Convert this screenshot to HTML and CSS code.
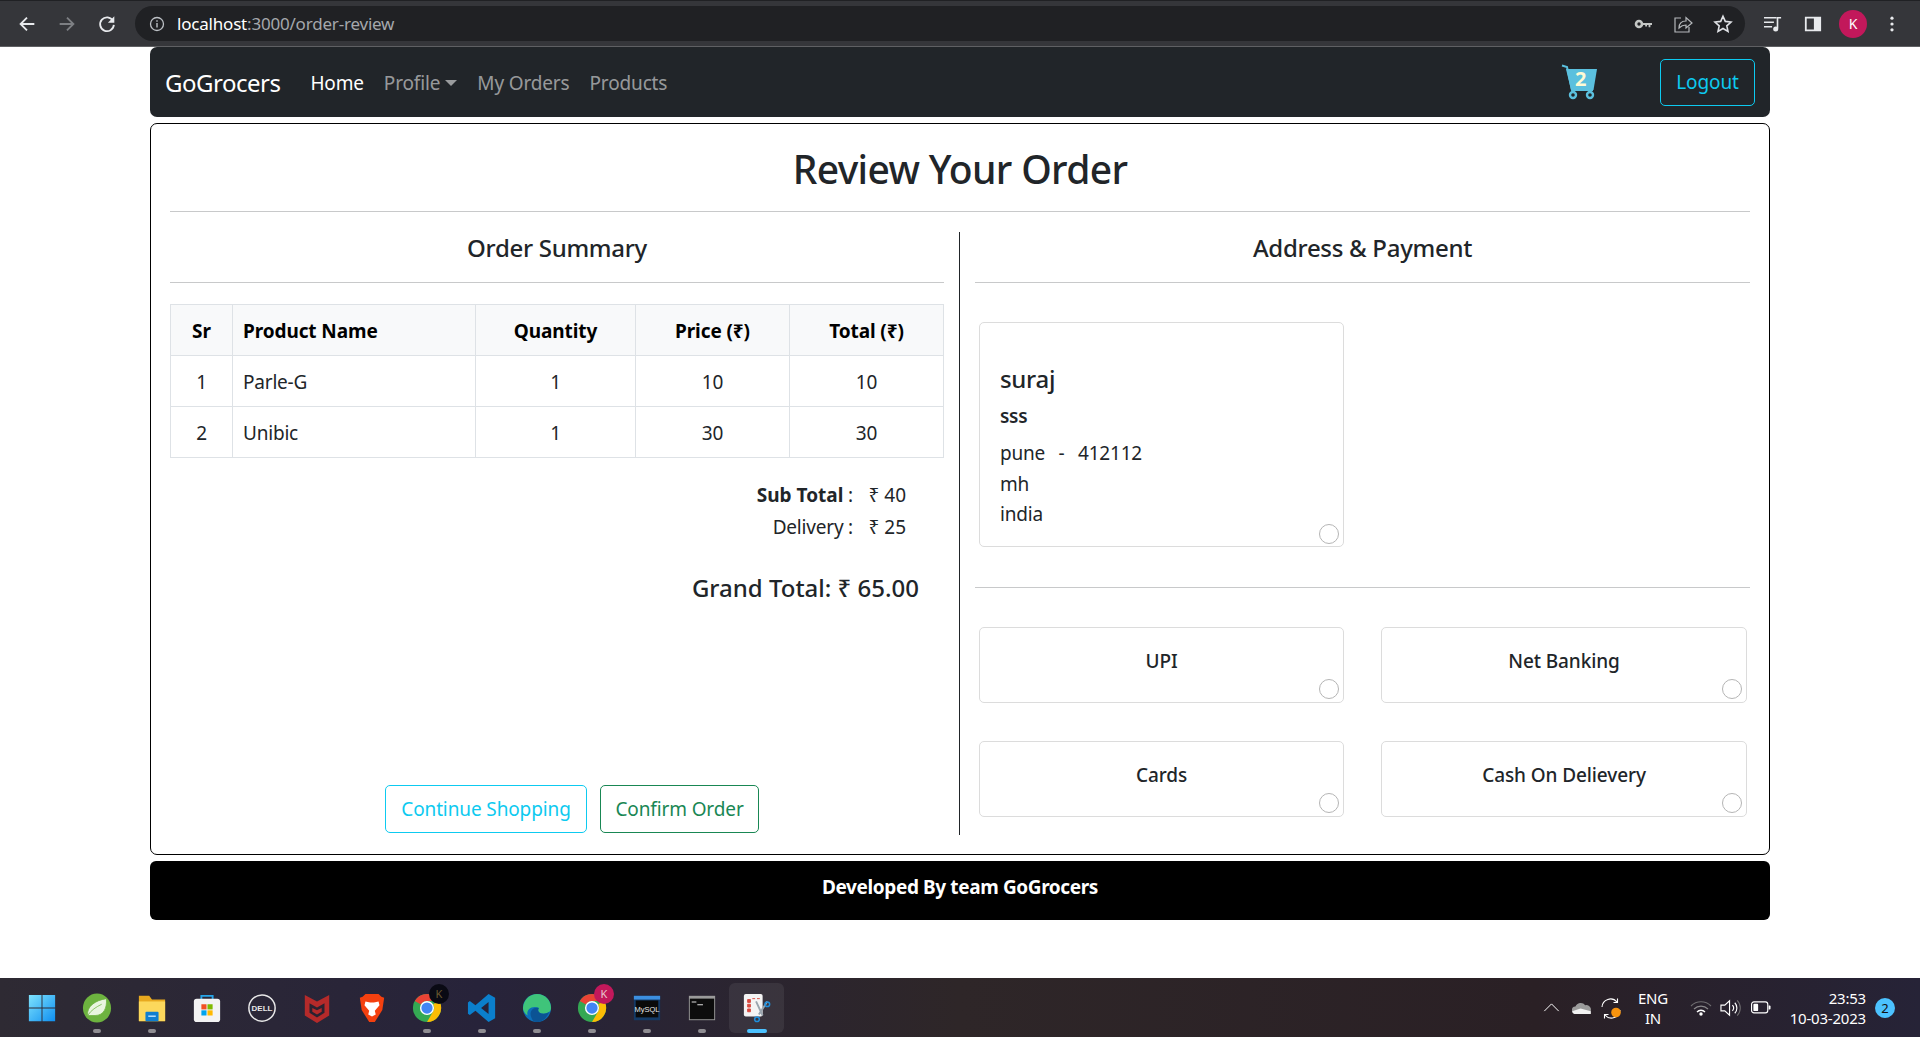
FILE: index.html
```html
<!DOCTYPE html>
<html lang="en">
<head>
<meta charset="utf-8">
<title>GoGrocers</title>
<link rel="stylesheet" href="styles.css">
</head>
<body>
<header class="chrome">
  <div class="chrome-nav">
    <svg class="ci" viewBox="0 0 24 24"><path d="M20 12H5M12 5l-7 7 7 7" fill="none" stroke="#e8eaed" stroke-width="2"/></svg>
    <svg class="ci" viewBox="0 0 24 24"><path d="M4 12h15M12 5l7 7-7 7" fill="none" stroke="#7d7f83" stroke-width="2"/></svg>
    <svg class="ci" viewBox="0 0 24 24"><path d="M18.5 8.5A7.5 7.5 0 1 0 19.5 13" fill="none" stroke="#e8eaed" stroke-width="2"/><path d="M20 3.5v7h-7z" fill="#e8eaed"/></svg>
  </div>
  <div class="omnibox">
    <svg class="info" viewBox="0 0 16 16"><circle cx="8" cy="8" r="6.5" fill="none" stroke="#bdc1c6" stroke-width="1.3"/><path d="M8 7v4.5M8 4.3v1.5" stroke="#bdc1c6" stroke-width="1.4"/></svg>
    <span class="url"><span class="host">localhost</span>:3000/order-review</span>
    <span class="spacer"></span>
    <svg class="oi" viewBox="0 0 20 20"><circle cx="6" cy="10" r="3" fill="none" stroke="#c4c7c5" stroke-width="2.6"/><path d="M9 9h10v2h-1.6v2.2h-1.8V11H14v1.6h-1.8V11H9z" fill="#c4c7c5"/></svg>
    <svg class="oi" viewBox="0 0 20 20"><path d="M8 4H2v14h14v-5M6 14c0-5 3-7 7-7V3.5l6 5.500-6 5v-3c-3 0-5 1-7 3z" fill="none" stroke="#b5b8bb" stroke-width="1.2"/></svg>
    <svg class="oi" viewBox="0 0 20 20"><path d="M10 2.2l2.3 5.2 5.7.6-4.2 3.8 1.2 5.6-5-2.9-5 2.9 1.2-5.6L2 8l5.7-.6z" fill="none" stroke="#dfe1e5" stroke-width="1.6"/></svg>
  </div>
  <div class="chrome-tools">
    <svg class="ti" viewBox="0 0 22 20"><path d="M1 3h14M1 8h11M1 13h9" stroke="#e8eaed" stroke-width="1.8"/><circle cx="14" cy="15.5" r="2.8" fill="#e8eaed"/><path d="M16 15V3h4" fill="none" stroke="#e8eaed" stroke-width="1.8"/></svg>
    <svg class="ti" viewBox="0 0 20 20"><path d="M1 2h18v16H1zM3 4v12h8V4z" fill="#e8eaed" fill-rule="evenodd"/></svg>
    <span class="avatar">K</span>
    <svg class="dots" viewBox="0 0 6 20"><circle cx="3" cy="3.5" r="1.8" fill="#e8eaed"/><circle cx="3" cy="10" r="1.8" fill="#e8eaed"/><circle cx="3" cy="16.5" r="1.8" fill="#e8eaed"/></svg>
  </div>
</header>

<div class="page">
  <nav class="navbar">
    <a class="brand">GoGrocers</a>
    <a class="nav-link active">Home</a>
    <a class="nav-link">Profile<span class="caret"></span></a>
    <a class="nav-link">My Orders</a>
    <a class="nav-link">Products</a>
    <span class="spacer"></span>
    <span class="cart">
      <svg class="cart-icon" viewBox="0 0 36 36"><path d="M5 5h31l-3.500 21H10z" fill="#5bc0de"/><path d="M1 1.500l5 1.500 5 23h21" fill="none" stroke="#5bc0de" stroke-width="2"/><circle cx="12" cy="31" r="3" fill="none" stroke="#5bc0de" stroke-width="2.400"/><circle cx="29" cy="31" r="3" fill="none" stroke="#5bc0de" stroke-width="2.400"/></svg>
      <b class="cart-count">2</b>
    </span>
    <button class="btn btn-logout">Logout</button>
  </nav>

  <main class="review">
    <h1 class="title">Review Your Order</h1>
    <hr class="rule">
    <div class="columns">
      <section class="col col-left">
        <h4 class="subtitle">Order Summary</h4>
        <hr class="rule rule-sub">
        <table class="orders">
          <thead>
            <tr><th class="c-sr">Sr</th><th class="c-name left">Product Name</th><th class="c-qty">Quantity</th><th class="c-price">Price (₹)</th><th>Total (₹)</th></tr>
          </thead>
          <tbody>
            <tr><td>1</td><td class="left">Parle-G</td><td>1</td><td>10</td><td>10</td></tr>
            <tr><td>2</td><td class="left">Unibic</td><td>1</td><td>30</td><td>30</td></tr>
          </tbody>
        </table>
        <div class="totals">
          <div class="total-row"><span><b>Sub Total</b> :</span><span class="amt">₹ 40</span></div>
          <div class="total-row"><span>Delivery :</span><span class="amt">₹ 25</span></div>
        </div>
        <div class="grand">Grand Total: ₹ 65.00</div>
        <div class="actions">
          <button class="btn btn-info">Continue Shopping</button>
          <button class="btn btn-success">Confirm Order</button>
        </div>
      </section>

      <section class="col col-right">
        <h4 class="subtitle">Address &amp; Payment</h4>
        <hr class="rule rule-sub">
        <div class="cards cards-address">
          <div class="card address">
            <h5 class="addr-name">suraj</h5>
            <div class="addr-line1">sss</div>
            <div class="addr-rest">pune &nbsp;-&nbsp; 412112<br>mh<br>india</div>
            <span class="radio"></span>
          </div>
        </div>
        <hr class="rule rule-pay">
        <div class="cards">
          <div class="card pay">UPI<span class="radio"></span></div>
          <div class="card pay">Net Banking<span class="radio"></span></div>
          <div class="card pay">Cards<span class="radio"></span></div>
          <div class="card pay">Cash On Delievery<span class="radio"></span></div>
        </div>
      </section>
    </div>
  </main>

  <footer class="foot">Developed By team GoGrocers</footer>
</div>

<div class="taskbar">
  <div class="task-icons">
    <span class="ticon"><svg viewBox="0 0 32 32"><defs><linearGradient id="w" x1="0" y1="0" x2="1" y2="1"><stop offset="0" stop-color="#7fe3fd"/><stop offset="1" stop-color="#0f8ff0"/></linearGradient></defs><path d="M2 2h13.500v13.500H2zM16.500 2H30v13.500H16.500zM2 16.500h13.500V30H2zM16.500 16.500H30V30H16.500z" fill="url(#w)"/></svg></span>
    <span class="ticon run"><svg viewBox="0 0 32 32"><ellipse cx="16" cy="16" rx="15" ry="15.500" fill="#6db33f"/><path d="M6 24C5 14 14 8 26 6c1 10-3 18-12 18-3 0-6 0-8 0zm0 0c4-6 9-9 15-12" fill="#e9f5df" stroke="#6db33f" stroke-width=".8"/></svg></span>
    <span class="ticon run"><svg viewBox="0 0 32 32"><path d="M2 3h11l3 4h14v23H2z" fill="#e8a91f"/><path d="M2 9h28v21H2z" fill="#fcd85c"/><rect x="9" y="20" width="14" height="10" rx="1" fill="#0f7fd0"/><rect x="12" y="24" width="8" height="1.500" fill="#bfe4ff"/></svg></span>
    <span class="ticon"><svg viewBox="0 0 32 32"><path d="M10 7V3h12v4" fill="none" stroke="#27a5e8" stroke-width="2"/><rect x="2" y="6" width="28" height="25" rx="3" fill="#f3f3f3"/><path d="M10 12h5.500v5.500H10z" fill="#f25022"/><path d="M16.500 12H22v5.500h-5.500z" fill="#7fba00"/><path d="M10 18.500h5.500V24H10z" fill="#00a4ef"/><path d="M16.500 18.500H22V24h-5.500z" fill="#ffb900"/></svg></span>
    <span class="ticon"><svg viewBox="0 0 32 32"><circle cx="16" cy="16" r="14" fill="none" stroke="#e8e8e8" stroke-width="1.600"/><text x="16" y="19" font-size="8.500" font-weight="700" fill="#e8e8e8" text-anchor="middle" font-family="Liberation Sans, sans-serif">DELL</text></svg></span>
    <span class="ticon"><svg viewBox="0 0 32 32"><path d="M3 2l13 7 13-7v22l-13 8-13-8z" fill="#b52a2a"/><path d="M8 11l8 4.500 8-4.500v10l-8 5-8-5z" fill="#2a2230"/><path d="M11 16l5 2.500 5-2.500v4l-5 3-5-3z" fill="#b52a2a"/></svg></span>
    <span class="ticon"><svg viewBox="0 0 32 32"><path d="M9 1h14l3 3 3 1-2 13-8 13h-6l-8-13L3 5l3-1z" fill="#f4400f"/><path d="M9 9l5 1h4l5-1 1 4-5 6 1 4-4 2-4-2 1-4-5-6z" fill="#fff"/></svg></span>
    <span class="ticon run"><svg viewBox="0 0 32 32"><circle cx="16" cy="16" r="15" fill="#34a853"/><path d="M16 1a15 15 0 0 1 13 7.500H16a7.500 7.500 0 0 0-6.500 3.750L3 8.500A15 15 0 0 1 16 1z" fill="#ea4335"/><path d="M29 8.500A15 15 0 0 1 16 31l6.500-11.250A7.500 7.500 0 0 0 22.500 12z" fill="#fbbc05"/><circle cx="16" cy="16" r="7.500" fill="#fff"/><circle cx="16" cy="16" r="6" fill="#4285f4"/></svg><b class="tbadge tbadge-dark">K</b></span>
    <span class="ticon run"><svg viewBox="0 0 32 32"><path d="M23 1l7 4v22l-7 4L9 19l-6 4.500-2-1.500V10l2-1.500L9 13zM23 9.500L15 16l8 6.500z" fill="#0b7fcc"/></svg></span>
    <span class="ticon run"><svg viewBox="0 0 32 32"><circle cx="16" cy="16" r="15" fill="#0c6fb8"/><path d="M1 16C2 6 9 1 16 1c9 0 15 7 15 15 0 4-4 6-8 6-5 0-7-3-5-6-6-3-14 1-12 8-3-2-5-5-5-8z" fill="#3fc47a"/><path d="M10 26c-3-6 2-12 8-10-2 3 0 6 5 6 3 0 5-1 6-2-2 6-7 11-13 11-3 0-5-2-6-5z" fill="#0b5394"/></svg></span>
    <span class="ticon run"><svg viewBox="0 0 32 32"><circle cx="16" cy="16" r="15" fill="#34a853"/><path d="M16 1a15 15 0 0 1 13 7.500H16a7.500 7.500 0 0 0-6.500 3.750L3 8.500A15 15 0 0 1 16 1z" fill="#ea4335"/><path d="M29 8.500A15 15 0 0 1 16 31l6.500-11.250A7.500 7.500 0 0 0 22.500 12z" fill="#fbbc05"/><circle cx="16" cy="16" r="7.500" fill="#fff"/><circle cx="16" cy="16" r="6" fill="#4285f4"/></svg><b class="tbadge tbadge-pink">K</b></span>
    <span class="ticon run"><svg viewBox="0 0 32 32"><rect x="2" y="3" width="28" height="26" fill="#143a66"/><rect x="2" y="3" width="28" height="4" fill="#3c8fe0"/><rect x="4" y="8" width="24" height="18" fill="#0a0a0a"/><text x="16" y="20" font-size="8" fill="#e8e8e8" text-anchor="middle" font-family="Liberation Sans, sans-serif">MySQL</text></svg></span>
    <span class="ticon run"><svg viewBox="0 0 32 32"><rect x="2" y="3" width="28" height="26" fill="#9a9a9a"/><rect x="3" y="6" width="26" height="22" fill="#0c0c0c"/><path d="M5 9h5v1H5zM11 12h6v1h-6z" fill="#ddd"/></svg></span>
    <span class="ticon current"><svg viewBox="0 0 32 32"><rect x="2" y="1" width="20" height="24" rx="2" fill="#f4f4f4"/><path d="M6 7h3v3H6zM6 12h3v3H6zM6 17h3v3H6zM11 6h3M16 6h3" stroke="#d8493f" fill="#d8493f"/><path d="M15 9l7 15M27 9l-9 14" stroke="#9aa5ae" stroke-width="2"/><circle cx="16" cy="28" r="2.500" fill="none" stroke="#1f8fdc" stroke-width="1.600"/><circle cx="27" cy="12" r="2.500" fill="none" stroke="#1f8fdc" stroke-width="1.600"/></svg></span>
  </div>
  <span class="spacer"></span>
  <div class="tray">
    <svg class="tr-caret" viewBox="0 0 18 10"><path d="M1 9l8-8 8 8" fill="none" stroke="#fff" stroke-width="1.100"/></svg>
    <svg class="tr-cloud" viewBox="0 0 22 15"><path d="M5 14a4 4 0 0 1-.5-8A6 6 0 0 1 15 4.500a4.500 4.500 0 0 1 2.500 9.500z" fill="#9b9b9b"/><path d="M1 11l9-3 11 3v3H5a4 4 0 0 1-4-3z" fill="#f2f2f2"/></svg>
    <span class="tr-sync"><svg viewBox="0 0 22 22"><path d="M2 10A8.500 8.500 0 0 1 17 5M20 13a8.500 8.500 0 0 1-15 5" fill="none" stroke="#fff" stroke-width="1.100"/><path d="M13.500 5.500h4V1.500M8.500 17.500h-4v4" fill="none" stroke="#fff" stroke-width="1.100"/><circle cx="16" cy="15.500" r="4.800" fill="#f7930e"/></svg></span>
    <div class="lang">ENG<br>IN</div>
    <svg class="tr-wifi" viewBox="0 0 22 16"><path d="M1 6a14 14 0 0 1 20 0" fill="none" stroke="#6f6d70" stroke-width="1.100"/><path d="M4 9a10 10 0 0 1 14 0" fill="none" stroke="#8a888b" stroke-width="1.100"/><path d="M7 12a5.500 5.500 0 0 1 8 0" fill="none" stroke="#fff" stroke-width="1.300"/><circle cx="11" cy="14" r="1.700" fill="#fff"/></svg>
    <svg class="tr-vol" viewBox="0 0 22 18"><path d="M1 6h4l5-4.500v15L5 12H1z" fill="none" stroke="#fff" stroke-width="1.200"/><path d="M13 6a4.500 4.500 0 0 1 0 6M15.500 3.500a8 8 0 0 1 0 11" fill="none" stroke="#fff" stroke-width="1.200"/><path d="M18 1a11.500 11.500 0 0 1 0 16" fill="none" stroke="#6f6d70" stroke-width="1.100"/></svg>
    <svg class="tr-batt" viewBox="0 0 21 13"><rect x=".6" y=".6" width="17" height="11.500" rx="2.500" fill="none" stroke="#fff" stroke-width="1.200"/><rect x="2.500" y="2.500" width="5" height="7.800" rx="1" fill="#fff"/><path d="M18.500 4.500h1a1 1 0 0 1 1 1v2a1 1 0 0 1-1 1h-1z" fill="#fff"/></svg>
    <div class="clock">23:53<br>10-03-2023</div>
    <span class="notif">2</span>
  </div>
</div>
</body>
</html>
```

FILE: styles.css
```css
* { box-sizing: border-box; }
html, body { margin: 0; padding: 0; }
body {
  height: 1037px;
  overflow: hidden;
  display: flex;
  flex-direction: column;
  background: #fff;
  color: #212529;
  font-family: "Noto Sans", "Open Sans", sans-serif;
  font-size: 19px;
}
.spacer { flex: 1; }

/* browser chrome */
.chrome {
  height: 47px;
  flex: none;
  display: flex;
  align-items: center;
  background: #35363a;
  border-top: 1px solid #202124;
  border-bottom: 1px solid #5f6063;
}
.chrome-nav { display: flex; gap: 18px; padding-left: 16px; width: 135px; flex: none; }
.ci { width: 22px; height: 22px; }
.omnibox {
  flex: 1;
  height: 35px;
  margin-right: 8px;
  padding: 0 12px 0 14px;
  display: flex;
  align-items: center;
  background: #202124;
  border-radius: 18px;
}
.info { width: 16px; height: 16px; margin-right: 12px; flex: none; }
.url { font-size: 17px; letter-spacing: -.2px; color: #a5a8ac; }
.host { color: #fff; }
.oi { width: 20px; height: 20px; margin-left: 20px; }
.chrome-tools { flex: none; width: 167px; display: flex; align-items: center; padding-left: 10px; gap: 20px; }
.ti { width: 20px; height: 18px; }
.avatar {
  width: 28px; height: 28px; border-radius: 50%;
  margin-left: -4px;
  background: #c2185b; color: #fff;
  display: flex; align-items: center; justify-content: center;
  font-size: 14px;
}
.dots { width: 6px; height: 18px; margin-left: 2px; }

/* page */
.page { width: 1620px; margin: 0 auto; flex: 1; display: flex; flex-direction: column; }
.navbar {
  height: 70px;
  flex: none;
  display: flex;
  align-items: center;
  padding: 0 15px;
  background: #212529;
  border-radius: 7px;
}
.brand { color: #fff; font-size: 24px; letter-spacing: -.5px; margin-right: 30px; }
.nav-link { color: rgba(255,255,255,.55); font-size: 19px; letter-spacing: -.15px; margin: 2px 20px 0 0; }
.nav-link.active { color: #fff; }
.caret {
  display: inline-block; margin-left: 5px; vertical-align: 4px;
  border-top: 6px solid; border-left: 6px solid transparent; border-right: 6px solid transparent;
}
.cart { position: relative; width: 36px; height: 36px; margin-right: 63px; }
.cart-icon { width: 36px; height: 36px; display: block; }
.cart-count {
  position: absolute; left: 14px; top: 4px;
  color: #fffbd5; font-size: 20px; line-height: 22px;
}
.btn {
  font-family: inherit; font-size: 19px; letter-spacing: -.12px;
  background: transparent; border: 1px solid; border-radius: 5px;
  height: 47px; padding: 0; line-height: 1;
}
.btn-logout { color: #0dcaf0; border-color: #0dcaf0; width: 95px; }
.btn-info { color: #0dcaf0; border-color: #0dcaf0; width: 202px; height: 48px; }
.btn-success { color: #198754; border-color: #198754; width: 159px; height: 48px; }

/* main */
.review {
  height: 732px;
  flex: none;
  margin-top: 6px;
  padding: 0 19px;
  border: 1px solid #000;
  border-radius: 7px;
  display: flex;
  flex-direction: column;
}
.title {
  margin: 20px 0 0;
  height: 67px;
  line-height: 49px;
  text-align: center;
  font-size: 39px;
  font-weight: 500;
  letter-spacing: -.65px;
}
.rule { margin: 0; border: 0; border-top: 1px solid #c8c9ca; flex: none; }
.columns { margin-top: 20px; display: grid; grid-template-columns: 790px 1fr; height: 603px; }
.col { display: flex; flex-direction: column; }
.col-left { padding-right: 15px; border-right: 1px solid #212529; }
.col-right { padding-left: 15px; }
.subtitle {
  margin: 0; height: 50px; line-height: 32px;
  text-align: center; font-size: 24px; font-weight: 500; letter-spacing: -.3px;
}
.rule-sub { margin-bottom: 21px; }

.orders { width: 100%; border-collapse: collapse; table-layout: fixed; font-size: 19px; flex: none; }
.orders th, .orders td {
  height: 51px; padding: 2px 10px 0; border: 1px solid #dee2e6; text-align: center;
  letter-spacing: -.2px; font-weight: 400;
}
.orders th { background: #f8f9fa; color: #000; font-weight: 700; letter-spacing: -.1px; }
.orders .left { text-align: left; }
.c-sr { width: 62px; }
.c-name { width: 243px; }
.c-qty { width: 160px; }
.c-price { width: 154px; }

.totals { margin-top: 23px; padding-right: 38px; display: flex; flex-direction: column; gap: 3px; }
.total-row { display: flex; justify-content: flex-end; line-height: 29px; letter-spacing: -.2px; }
.total-row b { font-weight: 700; letter-spacing: 0; }
.amt { width: 52px; text-align: right; margin-left: 1px; white-space: nowrap; letter-spacing: 0; }
.grand {
  margin-top: 29px; padding-right: 25px; text-align: right;
  font-size: 24px; font-weight: 500; letter-spacing: 0; line-height: 34px;
}
.actions { margin-top: auto; margin-bottom: 2px; display: flex; justify-content: flex-end; gap: 13px; padding-right: 185px; }

/* right column */
.cards { display: grid; grid-template-columns: 365px 366px; column-gap: 37px; row-gap: 38px; padding-left: 4px; }
.cards-address { margin-top: 18px; }
.card { position: relative; border: 1px solid #dcdcdc; border-radius: 5px; background: #fff; }
.address { height: 225px; padding: 38px 20px 0; }
.addr-name { margin: 0; font-size: 24px; font-weight: 500; line-height: 36px; letter-spacing: -.3px; }
.addr-line1 { font-weight: 600; line-height: 30px; margin-top: 4px; letter-spacing: -.3px; }
.addr-rest { line-height: 30.500px; margin-top: 7px; letter-spacing: -.2px; word-spacing: 2px; }
.pay { height: 76px; padding-top: 18px; text-align: center; font-weight: 500; line-height: 30px; letter-spacing: -.1px; }
.radio {
  position: absolute; right: 4px; bottom: 2px;
  width: 20px; height: 20px; border-radius: 50%;
  border: 1px solid #b5b5b5; background: #fff;
}
.pay .radio { bottom: 3px; }
.rule-pay { margin: 40px 0 39px; }

.foot {
  height: 59px; flex: none; margin-top: 6px;
  background: #000; color: #fff;
  border-radius: 6px;
  text-align: center; font-weight: 700; line-height: 52px; font-size: 19px; letter-spacing: -.38px;
}

/* taskbar */
.taskbar {
  height: 59px;
  flex: none;
  display: flex;
  align-items: center;
  background: linear-gradient(90deg, #2e2a33 0%, #27233a 25%, #2e2628 50%, #2a2025 80%, #262337 100%);
  color: #fff;
}
.task-icons { display: flex; padding-left: 14px; height: 100%; align-items: center; }
.ticon {
  position: relative; width: 55px; height: 50px; flex: none;
  display: flex; align-items: center; justify-content: center;
}
.ticon svg { width: 30px; height: 30px; }
.ticon.run::after, .ticon.current::after {
  content: ""; position: absolute; bottom: 0; left: 50%;
  width: 8px; height: 4px; margin-left: -4px; border-radius: 2px; background: #8f8d92;
}
.ticon.current { background: rgba(255,255,255,.07); border-radius: 6px; }
.ticon.current::after { width: 20px; margin-left: -10px; background: #4cc2ff; }
.tbadge {
  position: absolute; top: 1px; right: 5px;
  width: 20px; height: 20px; border-radius: 50%;
  display: flex; align-items: center; justify-content: center;
  font-size: 11px; font-weight: 400; color: #e8c8d0;
}
.tbadge-dark { background: #0a0a14; color: #6a5a30; }
.tbadge-pink { background: #c2185b; }

.tray { display: flex; align-items: center; padding-right: 25px; }
.tr-caret { width: 17px; height: 9px; margin-right: 11px; }
.tr-cloud { width: 21px; height: 14px; margin-right: 8px; }
.tr-sync { width: 22px; height: 22px; margin-right: 13px; }
.tr-sync svg { width: 22px; height: 22px; display: block; }
.lang { width: 36px; text-align: center; font-size: 15px; line-height: 20px; letter-spacing: -.2px; margin-right: 19px; }
.tr-wifi { width: 22px; height: 16px; margin-right: 8px; }
.tr-vol { width: 21px; height: 18px; margin-right: 10px; }
.tr-batt { width: 20px; height: 13px; margin-right: 10px; }
.clock { text-align: right; font-size: 15px; line-height: 20px; letter-spacing: -.2px; width: 85px; }
.notif {
  width: 20px; height: 20px; margin-left: 9px; border-radius: 50%;
  background: #4cc2ff; color: #111;
  display: flex; align-items: center; justify-content: center; font-size: 13px;
}
```
